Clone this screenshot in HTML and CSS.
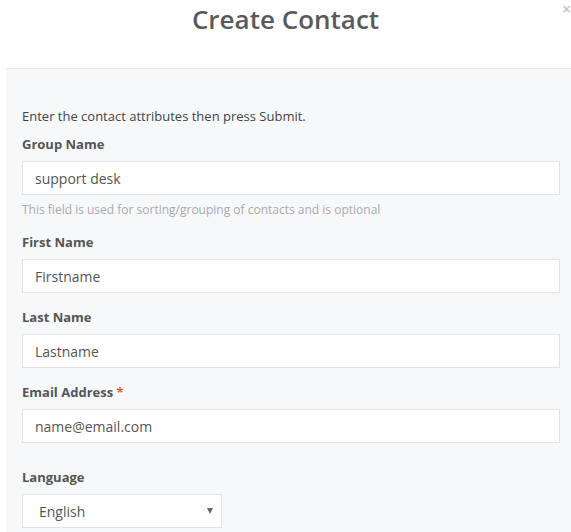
FILE: index.html
```html
<!DOCTYPE html>
<html>
<head>
<meta charset="utf-8">
<link rel="stylesheet" href="styles.css">
</head>
<body>
<div class="modal">
  <div class="modal-header">
    <h1 class="modal-title">Create Contact</h1>
    <span class="close">&times;</span>
  </div>
  <div class="modal-body">
    <p class="intro">Enter the contact attributes then press Submit.</p>
    <div class="group">
      <label class="label">Group Name</label>
      <input class="input" type="text" value="support desk">
      <div class="help">This field is used for sorting/grouping of contacts and is optional</div>
    </div>
    <div class="group">
      <label class="label">First Name</label>
      <input class="input" type="text" value="Firstname">
    </div>
    <div class="group">
      <label class="label">Last Name</label>
      <input class="input" type="text" value="Lastname">
    </div>
    <div class="group group-last">
      <label class="label">Email Address <span class="req">*</span></label>
      <input class="input" type="text" value="name@email.com">
    </div>
    <div class="group">
      <label class="label">Language</label>
      <div class="select">
        <span class="select-value">English</span>
        <span class="caret"></span>
      </div>
    </div>
  </div>
</div>
</body>
</html>
```
FILE: styles.css
```css
html, body {
  margin: 0;
  padding: 0;
  background: #ffffff;
  font-family: "Open Sans", "Noto Sans", sans-serif;
  overflow: hidden;
}

.modal {
  height: 532px;
  overflow: hidden;
}

.modal-header {
  position: relative;
  height: 68px;
  border-bottom: 1px solid #e4e5e7;
  background: #ffffff;
  margin-left: 6px;
}

.modal-title {
  margin: 0 0 0 -6px;
  padding-top: 1px;
  text-align: center;
  font-size: 26px;
  font-weight: 600;
  line-height: 36px;
  color: #5a5a5a;
}

.close {
  position: absolute;
  right: 0;
  top: 0;
  width: 9px;
  font-size: 16px;
  line-height: 18px;
  color: #c8c8c8;
  font-weight: 600;
  text-align: center;
}

.modal-body {
  margin-left: 6px;
  height: 463px;
  background: #f7f8fa;
  padding: 37px 11px 0 16px;
}

.intro {
  margin: 0 0 8px;
  font-size: 13px;
  line-height: 20px;
  color: #444444;
}

.group {
  display: flex;
  flex-direction: column;
  margin-bottom: 14px;
}

.group-last {
  margin-bottom: 24px;
}

.label {
  font-size: 13px;
  font-weight: 700;
  line-height: 20px;
  color: #555555;
  margin-bottom: 7px;
}

.req {
  color: #e8603c;
}

.input {
  box-sizing: border-box;
  width: 538px;
  height: 34px;
  border: 1px solid #e2e3e5;
  border-radius: 0;
  background: #ffffff;
  padding: 0 12px;
  font-family: "Open Sans", "Noto Sans", sans-serif;
  font-size: 14px;
  color: #555555;
  outline: none;
}

.help {
  margin-top: 7px;
  font-size: 12px;
  line-height: 16px;
  color: #aaaaaa;
}

.select {
  box-sizing: border-box;
  width: 200px;
  height: 34px;
  border: 1px solid #e2e3e5;
  background: #ffffff;
  display: flex;
  align-items: center;
  justify-content: space-between;
  padding: 0 8px 0 16px;
}

.select-value {
  font-size: 14px;
  color: #555555;
}

.caret {
  width: 0;
  height: 0;
  border-left: 3.5px solid transparent;
  border-right: 3.5px solid transparent;
  border-top: 6px solid #666666;
}
```
